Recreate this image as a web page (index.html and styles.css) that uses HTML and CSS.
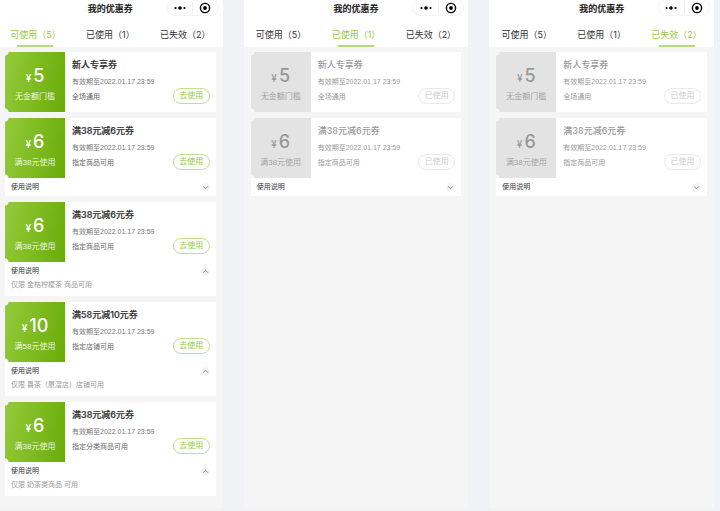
FILE: index.html
```html
<!DOCTYPE html>
<html lang="zh-CN">
<head>
<meta charset="utf-8">
<meta name="viewport" content="width=device-width, initial-scale=1">
<title>我的优惠券</title>
<link rel="stylesheet" href="styles.css">
</head>
<body>
<svg class="defs" aria-hidden="true">
  <symbol id="more" viewBox="0 0 12 6"><circle cx="1.5" cy="3" r="1.1"/><circle cx="6" cy="3" r="1.8"/><circle cx="10.5" cy="3" r="1.1"/></symbol>
  <symbol id="target" viewBox="0 0 12 12"><circle cx="6" cy="6" r="4.6" fill="none" stroke="currentColor" stroke-width="1.4"/><circle cx="6" cy="6" r="1.9"/></symbol>
  <symbol id="chevron" viewBox="0 0 10 10"><circle cx="5" cy="5" r="4.8" fill="#f3f3f3"/><path d="M2.3 3.7 5 6.4 7.7 3.7" fill="none" stroke="#777" stroke-width="0.9"/></symbol>
</svg>
<main class="board">
  <section class="phone">
    <header class="bar">
      <h1 class="bar-title">我的优惠券</h1>
      <div class="capsule">
        <button class="capsule-btn" aria-label="更多"><svg class="icon-more"><use href="#more"/></svg></button>
        <button class="capsule-btn" aria-label="关闭"><svg class="icon-target"><use href="#target"/></svg></button>
      </div>
    </header>
    <nav class="tabs">
      <button class="tab active">可使用（5）</button>
      <button class="tab">已使用（1）</button>
      <button class="tab">已失效（2）</button>
    </nav>
    <div class="list">
      <article class="card">
        <div class="coupon">
          <div class="face"><p class="amount"><span class="yen">¥</span>5</p><p class="limit">无金额门槛</p></div>
          <div class="info"><h2 class="name">新人专享券</h2><p class="date">有效期至2022.01.17 23:59</p><p class="scope">全场通用</p></div>
          <button class="use">去使用</button>
        </div>
      </article>
      <article class="card">
        <div class="coupon">
          <div class="face"><p class="amount"><span class="yen">¥</span>6</p><p class="limit">满38元使用</p></div>
          <div class="info"><h2 class="name">满38元减6元券</h2><p class="date">有效期至2022.01.17 23:59</p><p class="scope">指定商品可用</p></div>
          <button class="use">去使用</button>
        </div>
        <details class="notes"><summary class="notes-head">使用说明<svg class="chevron"><use href="#chevron"/></svg></summary></details>
      </article>
      <article class="card">
        <div class="coupon">
          <div class="face"><p class="amount"><span class="yen">¥</span>6</p><p class="limit">满38元使用</p></div>
          <div class="info"><h2 class="name">满38元减6元券</h2><p class="date">有效期至2022.01.17 23:59</p><p class="scope">指定商品可用</p></div>
          <button class="use">去使用</button>
        </div>
        <details class="notes" open><summary class="notes-head">使用说明<svg class="chevron"><use href="#chevron"/></svg></summary><p class="notes-text">仅限 金桔柠檬茶 商品可用</p></details>
      </article>
      <article class="card">
        <div class="coupon">
          <div class="face"><p class="amount"><span class="yen">¥</span>10</p><p class="limit">满58元使用</p></div>
          <div class="info"><h2 class="name">满58元减10元券</h2><p class="date">有效期至2022.01.17 23:59</p><p class="scope">指定店铺可用</p></div>
          <button class="use">去使用</button>
        </div>
        <details class="notes" open><summary class="notes-head">使用说明<svg class="chevron"><use href="#chevron"/></svg></summary><p class="notes-text">仅限 喜茶（厦滘店）店铺可用</p></details>
      </article>
      <article class="card">
        <div class="coupon">
          <div class="face"><p class="amount"><span class="yen">¥</span>6</p><p class="limit">满38元使用</p></div>
          <div class="info"><h2 class="name">满38元减6元券</h2><p class="date">有效期至2022.01.17 23:59</p><p class="scope">指定分类商品可用</p></div>
          <button class="use">去使用</button>
        </div>
        <details class="notes" open><summary class="notes-head">使用说明<svg class="chevron"><use href="#chevron"/></svg></summary><p class="notes-text">仅限 奶茶类商品 可用</p></details>
      </article>
    </div>
  </section>

  <section class="phone">
    <header class="bar">
      <h1 class="bar-title">我的优惠券</h1>
      <div class="capsule">
        <button class="capsule-btn" aria-label="更多"><svg class="icon-more"><use href="#more"/></svg></button>
        <button class="capsule-btn" aria-label="关闭"><svg class="icon-target"><use href="#target"/></svg></button>
      </div>
    </header>
    <nav class="tabs">
      <button class="tab">可使用（5）</button>
      <button class="tab active">已使用（1）</button>
      <button class="tab">已失效（2）</button>
    </nav>
    <div class="list">
      <article class="card spent">
        <div class="coupon">
          <div class="face"><p class="amount"><span class="yen">¥</span>5</p><p class="limit">无金额门槛</p></div>
          <div class="info"><h2 class="name">新人专享券</h2><p class="date">有效期至2022.01.17 23:59</p><p class="scope">全场通用</p></div>
          <button class="use">已使用</button>
        </div>
      </article>
      <article class="card spent">
        <div class="coupon">
          <div class="face"><p class="amount"><span class="yen">¥</span>6</p><p class="limit">满38元使用</p></div>
          <div class="info"><h2 class="name">满38元减6元券</h2><p class="date">有效期至2022.01.17 23:59</p><p class="scope">指定商品可用</p></div>
          <button class="use">已使用</button>
        </div>
        <details class="notes"><summary class="notes-head">使用说明<svg class="chevron"><use href="#chevron"/></svg></summary></details>
      </article>
    </div>
  </section>

  <section class="phone">
    <header class="bar">
      <h1 class="bar-title">我的优惠券</h1>
      <div class="capsule">
        <button class="capsule-btn" aria-label="更多"><svg class="icon-more"><use href="#more"/></svg></button>
        <button class="capsule-btn" aria-label="关闭"><svg class="icon-target"><use href="#target"/></svg></button>
      </div>
    </header>
    <nav class="tabs">
      <button class="tab">可使用（5）</button>
      <button class="tab">已使用（1）</button>
      <button class="tab active">已失效（2）</button>
    </nav>
    <div class="list">
      <article class="card spent">
        <div class="coupon">
          <div class="face"><p class="amount"><span class="yen">¥</span>5</p><p class="limit">无金额门槛</p></div>
          <div class="info"><h2 class="name">新人专享券</h2><p class="date">有效期至2022.01.17 23:59</p><p class="scope">全场通用</p></div>
          <button class="use">已使用</button>
        </div>
      </article>
      <article class="card spent">
        <div class="coupon">
          <div class="face"><p class="amount"><span class="yen">¥</span>6</p><p class="limit">满38元使用</p></div>
          <div class="info"><h2 class="name">满38元减6元券</h2><p class="date">有效期至2022.01.17 23:59</p><p class="scope">指定商品可用</p></div>
          <button class="use">已使用</button>
        </div>
        <details class="notes"><summary class="notes-head">使用说明<svg class="chevron"><use href="#chevron"/></svg></summary></details>
      </article>
    </div>
  </section>
</main>
</body>
</html>
```

FILE: styles.css
```css
* {
  box-sizing: border-box;
}

body {
  margin: 0;
  background: #f0f2f5;
  color: #333;
  font-family: "Liberation Sans", "Noto Sans CJK SC", sans-serif;
}

h1,
h2,
p {
  margin: 0;
}

button {
  padding: 0;
  border: 0;
  background: none;
  color: inherit;
  font-family: inherit;
}

.defs {
  display: none;
}

.board {
  display: grid;
  grid-template-columns: repeat(3, 1fr);
  gap: 21px;
  min-height: 100vh;
  margin-left: -2px;
  padding: 0 6px 3px 0;
}

.phone {
  background: #f5f5f5;
}

/* Title bar */
.bar {
  display: grid;
  grid-template-columns: 1fr auto 1fr;
  align-items: start;
  height: 20px;
  background: #fff;
}

.bar-title {
  grid-column: 2;
  color: #111;
  font-size: 9px;
  font-weight: 500;
  line-height: 19px;
  -webkit-text-stroke: 0.2px currentColor;
}

.capsule {
  display: flex;
  align-items: center;
  justify-self: end;
  width: 52px;
  height: 17px;
  margin: -1px 4px 0 0;
  border: 1px solid #f3f3f3;
  border-radius: 9px;
}

.capsule-btn {
  display: flex;
  flex: 1;
  align-items: center;
  justify-content: center;
  height: 11px;
  color: #000;
}

.capsule-btn + .capsule-btn {
  border-left: 1px solid #eee;
}

.icon-more {
  width: 12px;
  height: 6px;
}

.icon-target {
  width: 12px;
  height: 12px;
}

/* Tabs */
.tabs {
  display: grid;
  grid-template-columns: repeat(3, 1fr);
  height: 27px;
  background: #fff;
}

.tab {
  display: flex;
  flex-direction: column;
  align-items: center;
  justify-content: flex-end;
  font-family: Inter, "Noto Sans CJK SC", sans-serif;
  font-size: 9px;
  line-height: 21px;
  white-space: nowrap;
}

.tab::after {
  flex: none;
  width: 36px;
  height: 2px;
  content: "";
}

.tab.active {
  color: #93cb45;
}

.tab.active::after {
  background: #b5dc7c;
}

/* Coupon list */
.list {
  display: grid;
  gap: 6px;
  padding: 5px 7px 12px;
}

.card {
  background: #fff;
}

.coupon {
  display: flex;
  height: 60px;
}

.face {
  display: flex;
  flex: none;
  flex-direction: column;
  align-items: center;
  width: 60px;
  padding-top: 13px;
  background:
    radial-gradient(circle at 0 0, #f5f5f5 3px, transparent 4px),
    radial-gradient(circle at 0 100%, #f5f5f5 3px, transparent 4px),
    linear-gradient(100deg, #93cb39, #6aab09);
  color: #fff;
}

.amount {
  font-family: Inter, "Liberation Sans", sans-serif;
  font-size: 18px;
  font-weight: 500;
  line-height: 22px;
}

.yen {
  margin-right: 2px;
  font-size: 10px;
}

.limit {
  font-size: 8px;
  line-height: 16px;
  opacity: 0.85;
}

.info {
  flex: 1;
  padding: 5px 0 0 7px;
  white-space: nowrap;
}

.name {
  font-family: Inter, "Noto Sans CJK SC", sans-serif;
  font-size: 9px;
  font-weight: 500;
  line-height: 16px;
  -webkit-text-stroke: 0.2px currentColor;
}

.date,
.scope {
  font-size: 7px;
  line-height: 15px;
}

.date {
  padding-top: 1px;
  color: #777;
}

.scope {
  color: #666;
}

.use {
  align-self: flex-end;
  width: 37px;
  height: 16px;
  margin: 0 6px 8px 0;
  border: 1px solid #c0e08f;
  border-radius: 8px;
  color: #93cb45;
  font-size: 8px;
  line-height: 14px;
}

/* Usage notes */
.notes {
  padding: 0 6px;
}

.notes-head {
  display: flex;
  align-items: center;
  justify-content: space-between;
  height: 18px;
  font-size: 7px;
  line-height: 18px;
  list-style: none;
}

.chevron {
  width: 9px;
  height: 9px;
}

.notes[open] .chevron {
  transform: rotate(180deg);
}

.notes-text {
  padding-bottom: 6px;
  color: #999;
  font-size: 7px;
  line-height: 10px;
}

/* Used and expired coupons */
.spent .face {
  background:
    radial-gradient(circle at 0 0, #f5f5f5 3px, transparent 4px),
    radial-gradient(circle at 0 100%, #f5f5f5 3px, transparent 4px),
    #e3e3e3;
  color: #999;
}

.spent .name,
.spent .date,
.spent .scope {
  color: #999;
}

.spent .name {
  -webkit-text-stroke: 0;
}

.spent .use {
  border-color: #e8e8e8;
  color: #ccc;
}
```
